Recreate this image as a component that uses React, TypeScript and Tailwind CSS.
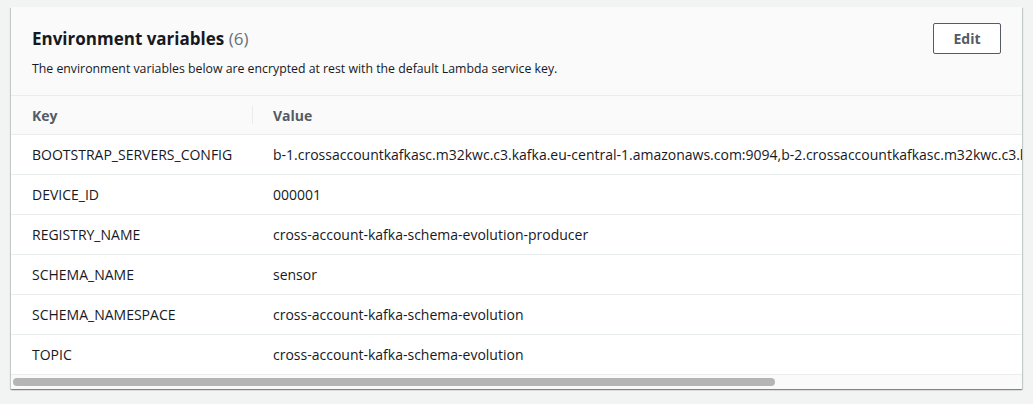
import React from 'react';

const rows: { key: string; value: string }[] = [
  {
    key: 'BOOTSTRAP_SERVERS_CONFIG',
    value:
      'b-1.crossaccountkafkasc.m32kwc.c3.kafka.eu-central-1.amazonaws.com:9094,b-2.crossaccountkafkasc.m32kwc.c3.kafka.eu-central-1.amazonaws.com:9094',
  },
  { key: 'DEVICE_ID', value: '000001' },
  { key: 'REGISTRY_NAME', value: 'cross-account-kafka-schema-evolution-producer' },
  { key: 'SCHEMA_NAME', value: 'sensor' },
  { key: 'SCHEMA_NAMESPACE', value: 'cross-account-kafka-schema-evolution' },
  { key: 'TOPIC', value: 'cross-account-kafka-schema-evolution' },
];

export default function App() {
  return (
    <div
      className="h-[404px] bg-[#f2f3f3] pt-[7px] pl-[11px] pr-[11px]"
      style={{ fontFamily: '"Open Sans", "Liberation Sans", Arial, sans-serif' }}
    >
      <div className="bg-white overflow-hidden shadow-[0_1px_1px_0_rgba(0,28,36,0.3),1px_1px_1px_0_rgba(0,28,36,0.15),-1px_1px_1px_0_rgba(0,28,36,0.15)]">
        {/* header */}
        <div className="bg-[#fafafa] h-[88px] flex justify-between pl-[21px] pr-[21px]">
          <div className="pt-[20px]">
            <h2 className="text-[17px] leading-[24px] font-bold text-[#16191f]">
              Environment variables <span className="font-normal text-[#687078]">(6)</span>
            </h2>
            <p className="mt-[10px] text-[12.3px] leading-[16px] text-[#16191f]">
              The environment variables below are encrypted at rest with the default Lambda service key.
            </p>
          </div>
          <div className="pt-[16px]">
            <button className="w-[68px] h-[31px] border border-[#545b64] rounded-[2px] bg-white text-[14px] font-bold text-[#545b64]">
              Edit
            </button>
          </div>
        </div>

        {/* table */}
        <div className="border-t border-[#eaeded] text-[14px] text-[#16191f]">
          <div className="flex h-[38px] items-center bg-[#fafafa] font-bold text-[#545b64]">
            <div className="w-[242px] shrink-0 pl-[21px] flex items-center justify-between">
              <span>Key</span>
              <span className="h-[18px] w-px bg-[#eaeded]" />
            </div>
            <div className="pl-[20px]">Value</div>
          </div>
          {rows.map((r) => (
            <div key={r.key} className="flex h-[40px] items-center border-t border-[#eaeded] whitespace-nowrap">
              <div className="w-[242px] shrink-0 pl-[21px]">{r.key}</div>
              <div className="pl-[20px]">{r.value}</div>
            </div>
          ))}
          {/* horizontal scrollbar */}
          <div className="h-[15px] border-t border-[#eaeded] bg-[#fafafa] pl-[2px] pt-[3px]">
            <div className="h-[8px] w-[762px] rounded-full bg-[#b5b5b5]" />
          </div>
        </div>
      </div>
    </div>
  );
}
